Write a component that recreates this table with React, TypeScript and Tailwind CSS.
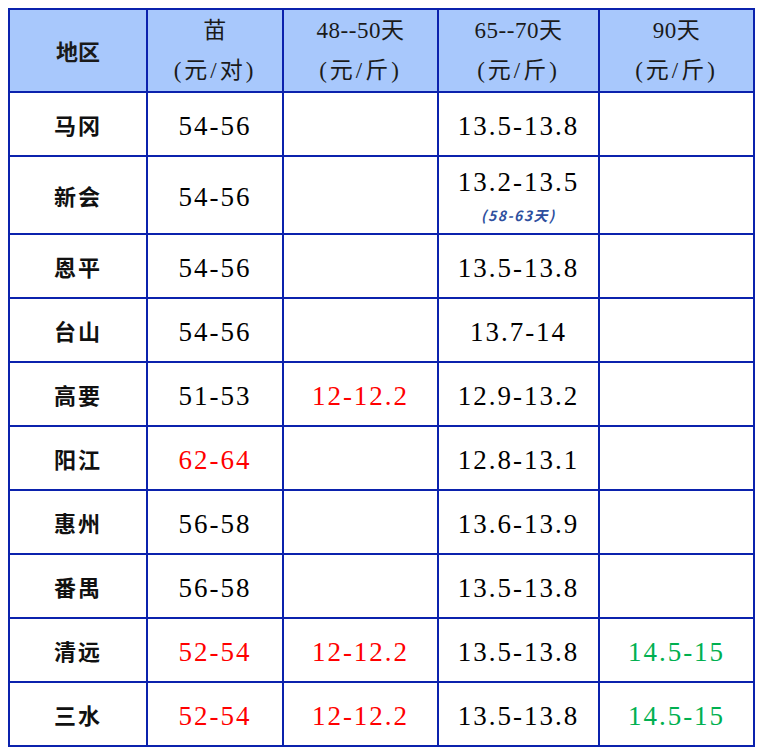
import React from 'react';

type Cell = { text: string; color?: 'red' | 'green'; note?: string };

const rows: { region: string; cells: Cell[]; tall?: boolean }[] = [
  { region: '马冈', cells: [{ text: '54-56' }, { text: '' }, { text: '13.5-13.8' }, { text: '' }] },
  {
    region: '新会',
    tall: true,
    cells: [{ text: '54-56' }, { text: '' }, { text: '13.2-13.5', note: '(58-63天)' }, { text: '' }],
  },
  { region: '恩平', cells: [{ text: '54-56' }, { text: '' }, { text: '13.5-13.8' }, { text: '' }] },
  { region: '台山', cells: [{ text: '54-56' }, { text: '' }, { text: '13.7-14' }, { text: '' }] },
  {
    region: '高要',
    cells: [{ text: '51-53' }, { text: '12-12.2', color: 'red' }, { text: '12.9-13.2' }, { text: '' }],
  },
  { region: '阳江', cells: [{ text: '62-64', color: 'red' }, { text: '' }, { text: '12.8-13.1' }, { text: '' }] },
  { region: '惠州', cells: [{ text: '56-58' }, { text: '' }, { text: '13.6-13.9' }, { text: '' }] },
  { region: '番禺', cells: [{ text: '56-58' }, { text: '' }, { text: '13.5-13.8' }, { text: '' }] },
  {
    region: '清远',
    cells: [
      { text: '52-54', color: 'red' },
      { text: '12-12.2', color: 'red' },
      { text: '13.5-13.8' },
      { text: '14.5-15', color: 'green' },
    ],
  },
  {
    region: '三水',
    cells: [
      { text: '52-54', color: 'red' },
      { text: '12-12.2', color: 'red' },
      { text: '13.5-13.8' },
      { text: '14.5-15', color: 'green' },
    ],
  },
];

const headers = [
  ['苗', '(元/对)'],
  ['48--50天', '(元/斤)'],
  ['65--70天', '(元/斤)'],
  ['90天', '(元/斤)'],
];

const cjk = "font-['Noto_Sans_CJK_SC',sans-serif]";
const num = "font-['Liberation_Serif','Noto_Sans_CJK_SC',serif]";
const td = 'border-2 border-[#0b22ad] text-center align-middle p-0';

export default function App() {
  return (
    <div className="min-h-screen bg-white pl-2 pt-2">
      <table className="border-collapse w-[745px] table-fixed">
        <colgroup>
          <col className="w-[138px]" />
          <col className="w-[136px]" />
          <col className="w-[155px]" />
          <col className="w-[161px]" />
          <col className="w-[155px]" />
        </colgroup>
        <thead>
          <tr className="h-[83px] bg-[#a8c8fc] text-[#1a1a1a]">
            <th className={`${td} ${cjk} text-[22px] font-bold`}>地区</th>
            {headers.map(([a, b]) => (
              <th key={a} className={`${td} ${num} text-[23px] font-normal leading-[40px]`}>
                <div className="tracking-[0.5px]">{a}</div>
                <div className="tracking-[3px]">{b}</div>
              </th>
            ))}
          </tr>
        </thead>
        <tbody>
          {rows.map((r) => (
            <tr key={r.region} className={r.tall ? 'h-[78px]' : 'h-[64px]'}>
              <td className={`${td} ${cjk} text-[22px] font-bold text-[#111] tracking-[2px]`}>{r.region}</td>
              {r.cells.map((c, i) => (
                <td
                  key={i}
                  className={`${td} ${num} text-[27px] tracking-[2px] ${
                    c.color === 'red' ? 'text-[#ff0000]' : c.color === 'green' ? 'text-[#00b050]' : 'text-[#000]'
                  }`}
                >
                  <div className={`leading-[30px] ${c.note ? 'pt-0' : 'pt-1'}`}>{c.text}</div>
                  {c.note && (
                    <div
                      className={`${cjk} text-[14px] italic font-bold tracking-[1.5px] text-[#2e4f9e] leading-[16px] mt-[10px]`}
                    >
                      {c.note}
                    </div>
                  )}
                </td>
              ))}
            </tr>
          ))}
        </tbody>
      </table>
    </div>
  );
}
